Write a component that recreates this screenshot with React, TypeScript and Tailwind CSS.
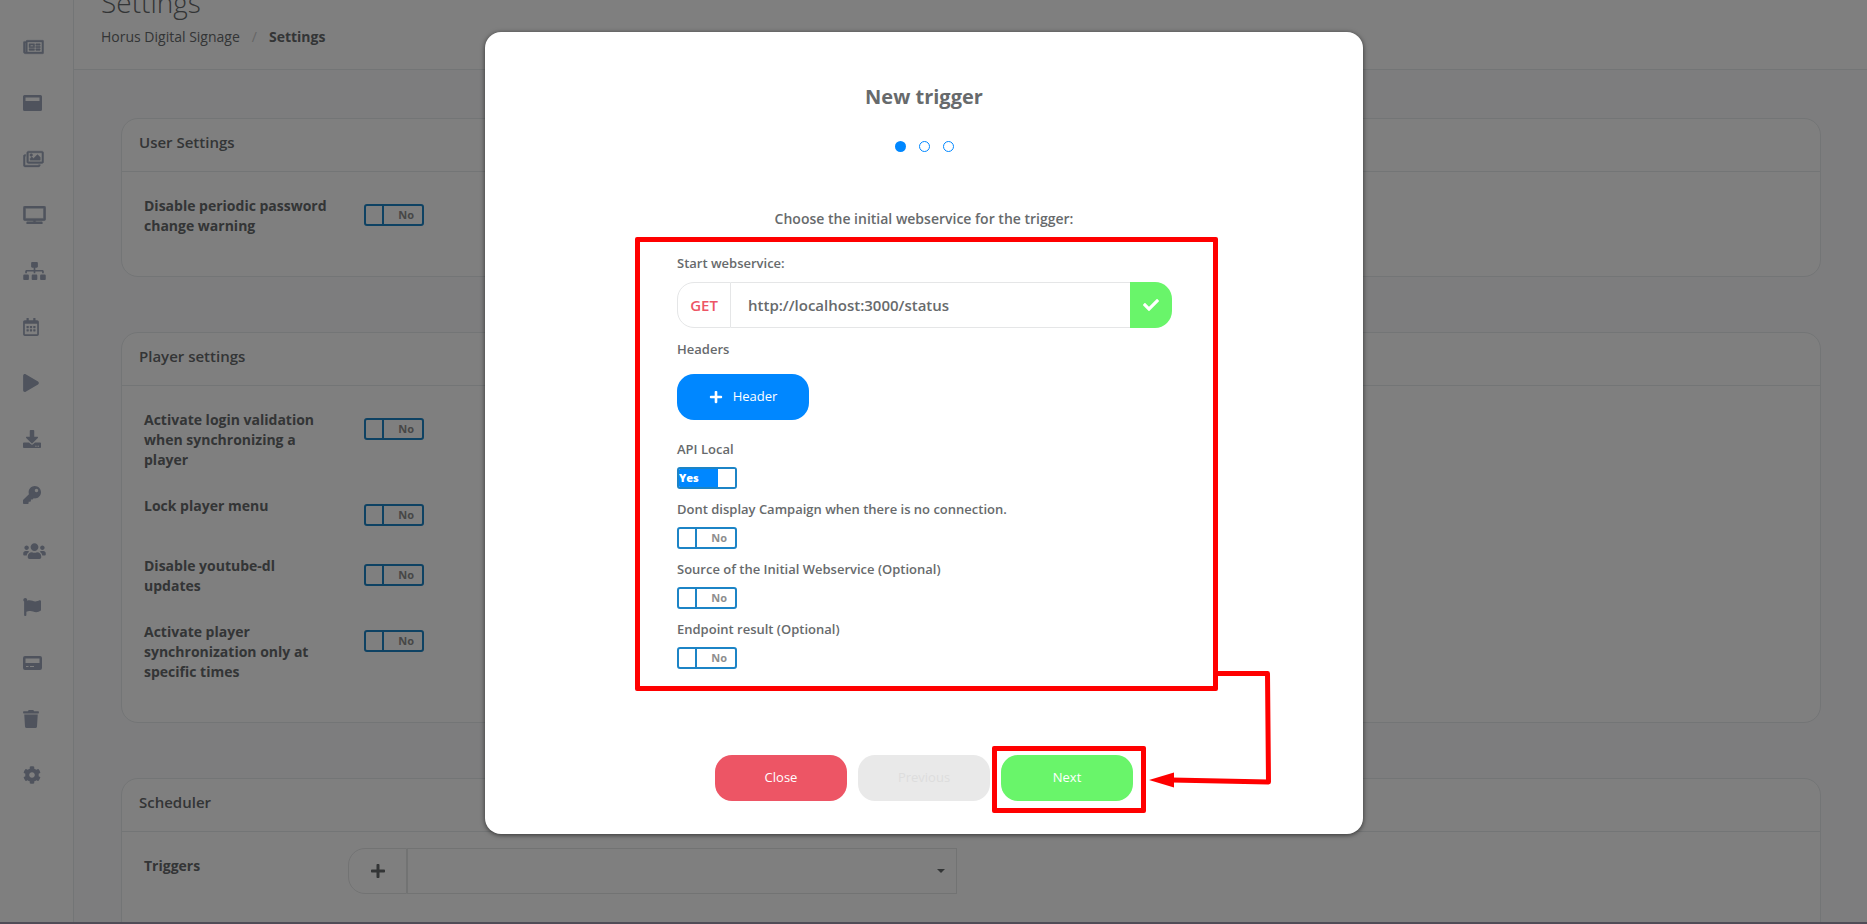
import { useState } from "react"
import {
  FaCheck,
  FaCog,
  FaDownload,
  FaFlag,
  FaKey,
  FaPlay,
  FaPlus,
  FaRegCalendarAlt,
  FaRegImages,
  FaRegNewspaper,
  FaSitemap,
  FaTrash,
  FaTv,
  FaUsers,
} from "react-icons/fa"

function WindowIcon() {
  return (
    <svg viewBox="0 0 19 16" className="h-4 w-[19px]" fill="currentColor">
      <path fillRule="evenodd" d="M1.500 0h16a1.500 1.500 0 0 1 1.500 1.500v13a1.500 1.500 0 0 1-1.500 1.500h-16a1.500 1.500 0 0 1-1.500-1.500v-13a1.500 1.500 0 0 1 1.500-1.500zM2.500 2.500v3.500h14v-3.500z" />
    </svg>
  )
}

function CardIcon() {
  return (
    <svg viewBox="0 0 19 14" className="h-[14px] w-[19px]" fill="currentColor">
      <path fillRule="evenodd" d="M2 0h15a2 2 0 0 1 2 2v10a2 2 0 0 1-2 2h-15a2 2 0 0 1-2-2v-10a2 2 0 0 1 2-2zM2.500 2.500v4.500h14v-4.500zM3 10v1h2.500v-1zM7 10v1h4v-1z" />
    </svg>
  )
}

const navItems = [
  { name: "News", icon: <FaRegNewspaper size={18} className="w-[21px] stroke-current stroke-[12]" /> },
  { name: "Templates", icon: <WindowIcon /> },
  { name: "Media", icon: <FaRegImages size={18} className="w-[21px] stroke-current stroke-[12]" /> },
  { name: "Players", icon: <FaTv size={18} className="w-[23px] stroke-current stroke-[12]" /> },
  { name: "Groups", icon: <FaSitemap size={18} className="w-[23px]" /> },
  { name: "Calendar", icon: <FaRegCalendarAlt size={18} className="w-4" /> },
  { name: "Play", icon: <FaPlay size={18} className="w-4" /> },
  { name: "Downloads", icon: <FaDownload size={18} /> },
  { name: "Keys", icon: <FaKey size={18} /> },
  { name: "Users", icon: <FaUsers size={18} className="w-[23px]" /> },
  { name: "Reports", icon: <FaFlag size={18} /> },
  { name: "Devices", icon: <CardIcon /> },
  { name: "Trash", icon: <FaTrash size={18} className="w-4" /> },
  { name: "Settings", icon: <FaCog size={18} /> },
]

function Toggle({ id, defaultOn = false }: { id: string; defaultOn?: boolean }) {
  const [on, setOn] = useState(defaultOn)
  return (
    <span className="relative block h-[22px] w-[60px] shrink-0 overflow-hidden rounded-[3px] border-2 border-[#1c84c6] text-[11px] leading-[18px] font-bold">
      <input
        id={id}
        type="checkbox"
        checked={on}
        onChange={(e) => setOn(e.target.checked)}
        className="absolute inset-0 z-10 m-0 cursor-pointer opacity-0"
      />
      {on ? (
        <span className="flex h-full">
          <span className="w-[39px] bg-[#0087ff] font-extrabold text-white">Yes</span>
          <span className="flex-1 bg-white" />
        </span>
      ) : (
        <span className="flex h-full">
          <span className="w-[18px] border-r-2 border-[#1c84c6]" />
          <span className="flex-1 pr-2 text-right text-[#8e8e8e]">No</span>
        </span>
      )}
    </span>
  )
}

function Card({ title, children, open = false }: { title: string; children: React.ReactNode; open?: boolean }) {
  return (
    <section
      className={
        open
          ? "h-[240px] rounded-t-[17px] border border-[#e7eaec] bg-white"
          : "rounded-[17px] border border-[#e7eaec] bg-white pb-10"
      }
    >
      <h2 className="h-[53px] border-b border-[#e7eaec] pt-3 pl-[17px] text-[15px] leading-[22px] font-semibold">{title}</h2>
      {children}
    </section>
  )
}

function SettingRow({ id, label }: { id: string; label: string }) {
  return (
    <div className="flex min-h-[34px] items-start pl-[22px]">
      <label htmlFor={id} className="w-[220px] pr-8 text-sm leading-[20px] font-bold">
        {label}
      </label>
      <div className="pt-2">
        <Toggle id={id} />
      </div>
    </div>
  )
}

function Field({ id, label, defaultOn }: { id: string; label: string; defaultOn?: boolean }) {
  return (
    <div>
      <label htmlFor={id} className="block pb-[9px] text-[13px] leading-[18px] font-semibold">
        {label}
      </label>
      <Toggle id={id} defaultOn={defaultOn} />
    </div>
  )
}

function TriggerModal() {
  return (
    <div
      role="dialog"
      aria-labelledby="modal-title"
      className="relative flex w-[878px] flex-col items-center rounded-[16px] bg-white pb-[33px] text-[#676a6c] shadow-[0_1px_5px_rgba(0,0,0,0.6)]"
    >
      <h1 id="modal-title" className="pt-[51px] text-xl leading-7 font-bold">
        New trigger
      </h1>
      <div className="flex gap-[13px] pt-[30px]">
        <span className="size-[11px] rounded-full bg-[#0087ff]" />
        <span className="size-[11px] rounded-full border border-[#0087ff]" />
        <span className="size-[11px] rounded-full border border-[#0087ff]" />
      </div>
      <p className="pt-[57px] text-sm leading-5 font-semibold">Choose the initial webservice for the trigger:</p>

      <div className="mt-2 ml-[5px] h-[454px] w-[583px] rounded-[2px] border-5 border-[#ff0000] pt-3 pr-[41px] pl-[37px]">
        <label htmlFor="webservice" className="block text-[13px] leading-[18px] font-semibold">
          Start webservice:
        </label>
        <div className="mt-[10px] flex h-[46px]">
          <button className="w-[54px] rounded-l-[17px] border border-[#e5e6e7] text-[15px] font-semibold text-[#ed5565]">GET</button>
          <input
            id="webservice"
            defaultValue="http://localhost:3000/status"
            className="min-w-0 flex-1 border-y border-[#e5e6e7] px-[17px] text-[15px] font-semibold outline-none"
          />
          <button aria-label="Validate" className="flex w-[42px] items-center justify-center rounded-r-[17px] bg-[#69f56a] text-white">
            <FaCheck size={16} />
          </button>
        </div>
        <p className="pt-3 text-[13px] leading-[18px] font-semibold">Headers</p>
        <button className="mt-4 flex h-[46px] w-[132px] items-center justify-center gap-[10px] rounded-[17px] bg-[#0087ff] text-[13px] text-white">
          <FaPlus size={14} />
          Header
        </button>
        <div className="flex flex-col gap-[11px] pt-5">
          <Field id="api-local" label="API Local" defaultOn />
          <Field id="no-connection" label="Dont display Campaign when there is no connection." />
          <Field id="source" label="Source of the Initial Webservice (Optional)" />
          <Field id="endpoint" label="Endpoint result (Optional)" />
        </div>
      </div>

      <div className="flex gap-[11px] pt-16 text-[13px]">
        <button className="h-[46px] w-[132px] rounded-[17px] bg-[#ed5565] text-white">Close</button>
        <button disabled className="h-[46px] w-[132px] rounded-[17px] bg-[#e9e9e9] text-[#dddddd]">
          Previous
        </button>
        <div className="relative">
          <button className="h-[46px] w-[132px] rounded-[17px] bg-[#69f56a] text-white">Next</button>
          <span className="pointer-events-none absolute -top-[9px] -right-[13px] -bottom-3 -left-[9px] rounded-[2px] border-5 border-[#ff0000]" />
        </div>
      </div>

      {/* Arrow from the form to the Next button */}
      <svg viewBox="0 0 124 120" className="pointer-events-none absolute top-[638px] left-[662px] h-[120px] w-[124px]">
        <path d="M69 3.500h51.500l1 108.500-97-2" fill="none" stroke="#ff0000" strokeWidth="5" strokeLinejoin="round" />
        <path d="M2 110l25-7.500v15z" fill="#ff0000" />
      </svg>
    </div>
  )
}

export default function App() {
  return (
    <div className="relative h-screen overflow-hidden bg-[#fafafc] font-['Open_Sans','Noto_Sans',sans-serif] text-[#676a6c]">
      <div className="flex h-full">
        <nav className="w-[74px] shrink-0 border-r border-[#e7eaec] bg-white pt-[19px] text-[#9ea7bb]">
          {navItems.map((item) => (
            <a key={item.name} href="#" aria-label={item.name} className="flex h-14 items-center pl-[23px]">
              {item.icon}
            </a>
          ))}
        </nav>

        <main className="min-w-0 flex-1">
          <header className="h-[70px] overflow-hidden border-b border-[#e7eaec] bg-white pl-[27px]">
            <p className="-mt-4 text-[28px] leading-[36px] font-light">Settings</p>
            <div className="flex pt-[7px] text-sm leading-5">
              <a href="#">Horus Digital Signage</a>
              <span className="px-3 text-[#cccccc]">/</span>
              <strong>Settings</strong>
            </div>
          </header>

          <div className="flex flex-col gap-[55px] pt-12 pr-[46px] pl-[47px]">
            <Card title="User Settings">
              <div className="pt-6">
                <SettingRow id="password-warning" label="Disable periodic password change warning" />
              </div>
            </Card>
            <Card title="Player settings">
              <div className="flex flex-col gap-[26px] pt-6">
                <SettingRow id="login-validation" label="Activate login validation when synchronizing a player" />
                <SettingRow id="lock-menu" label="Lock player menu" />
                <SettingRow id="youtube-dl" label="Disable youtube-dl updates" />
                <SettingRow id="sync-times" label="Activate player synchronization only at specific times" />
              </div>
            </Card>
            <Card title="Scheduler" open>
              <div className="flex items-start pt-4 pl-[22px]">
                <label htmlFor="triggers" className="w-[204px] pt-2 text-sm leading-5 font-bold">
                  Triggers
                </label>
                <button
                  aria-label="Add trigger"
                  className="flex h-[46px] w-[59px] items-center justify-center rounded-l-[17px] border border-[#e5e6e7]"
                >
                  <FaPlus size={16} />
                </button>
                <div className="relative">
                  <select id="triggers" className="h-[46px] w-[550px] appearance-none border border-[#e5e6e7]" />
                  <span className="pointer-events-none absolute top-[21px] right-3 border-x-4 border-t-4 border-x-transparent border-t-[#676a6c]" />
                </div>
              </div>
            </Card>
          </div>
        </main>
      </div>

      <div className="absolute inset-0 flex items-start justify-center bg-black/50 pt-8 pr-[19px]">
        <TriggerModal />
      </div>
      <div className="absolute inset-x-0 bottom-0 h-[2px] bg-[#504c57]" />
    </div>
  )
}
